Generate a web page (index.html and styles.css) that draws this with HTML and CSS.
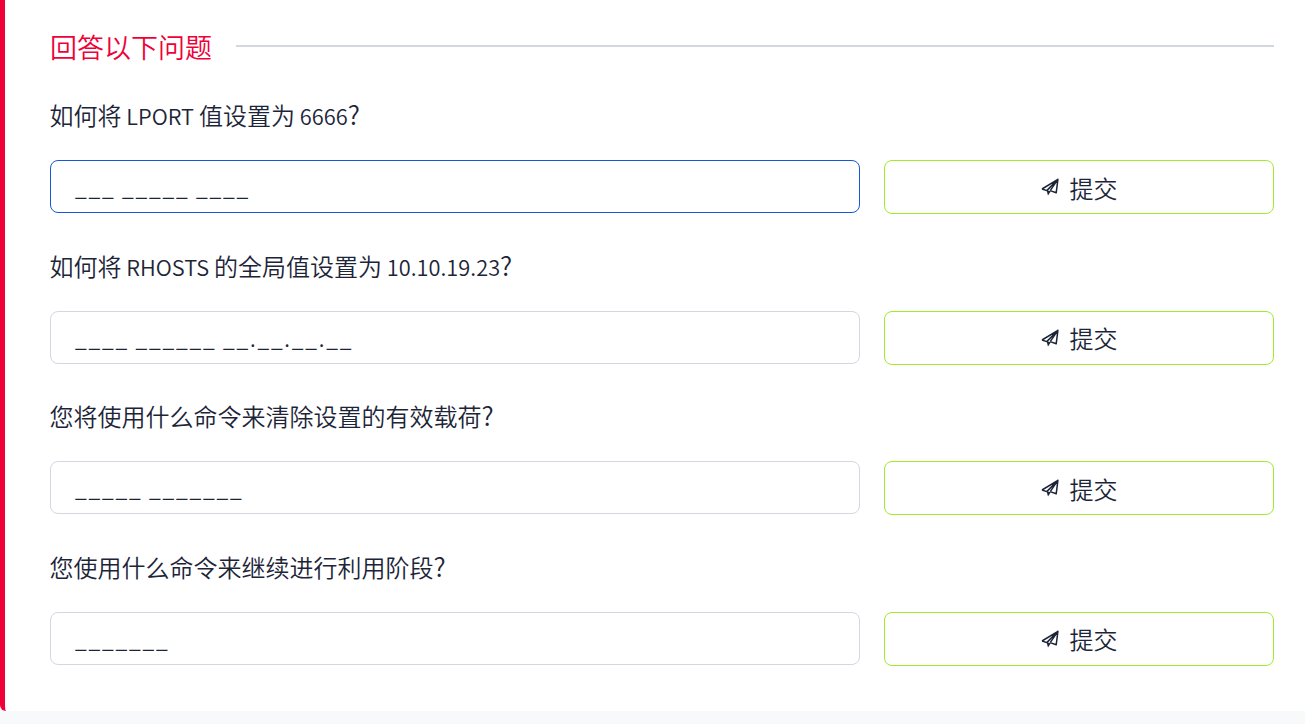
FILE: index.html
```
<!DOCTYPE html>
<html lang="zh-CN">
<head>
<meta charset="utf-8">
<title>回答以下问题</title>
<link rel="stylesheet" href="styles.css">
</head>
<body>
<svg class="sprite" aria-hidden="true">
  <symbol id="plane" viewBox="0 0 18 18">
    <path d="M1 11 16.9 1.3 15.2 14.8 9.2 12.6M1 11 5.8 12.6 16.9 1.3 9.2 12.6" fill="none" stroke="currentColor" stroke-width="1.5" stroke-linejoin="round"/>
    <path d="M5.6 12.3 9.8 13.2 7 17.6Z" fill="currentColor"/>
  </symbol>
</svg>
<main class="card">
  <header class="heading"><h1 class="title">回答以下问题</h1><span class="rule"></span></header>
  <section class="question">
    <p class="label">如何将 <span class="latin">LPORT</span> 值设置为 <span class="latin">6666</span><span class="mark">?</span></p>
    <div class="row"><div class="field active">___ _____ ____</div><button class="submit"><svg class="icon"><use href="#plane"/></svg>提交</button></div>
  </section>
  <section class="question">
    <p class="label">如何将 <span class="latin">RHOSTS</span> 的全局值设置为 <span class="latin">10.10.19.23</span><span class="mark">?</span></p>
    <div class="row"><div class="field">____ ______ __.__.__.__</div><button class="submit"><svg class="icon"><use href="#plane"/></svg>提交</button></div>
  </section>
  <section class="question">
    <p class="label">您将使用什么命令来清除设置的有效载荷<span class="mark">?</span></p>
    <div class="row"><div class="field">_____ _______</div><button class="submit"><svg class="icon"><use href="#plane"/></svg>提交</button></div>
  </section>
  <section class="question">
    <p class="label">您使用什么命令来继续进行利用阶段<span class="mark">?</span></p>
    <div class="row"><div class="field">_______</div><button class="submit"><svg class="icon"><use href="#plane"/></svg>提交</button></div>
  </section>
</main>
</body>
</html>
```
FILE: styles.css
```
* { box-sizing: border-box; }
body {
  margin: 0;
  height: 724px;
  overflow: hidden;
  background: #f8f9fb;
  color: #1c2538;
  font-family: "Noto Sans CJK SC", sans-serif;
  font-weight: 350;
}
.sprite { display: none; }
.card {
  height: 711px;
  padding: 26px 31px 0 45px;
  background: #fff;
  border-left: 5px solid #ef0039;
  border-bottom-left-radius: 6px;
}
.heading { display: flex; align-items: center; gap: 24px; height: 40px; }
.title { margin: 0; padding-top: 2px; font-size: 27px; line-height: 40px; font-weight: 350; color: #ef0039; }
.rule { flex: 1; height: 2px; background: #d3d7df; }
.question { height: 150.5px; padding-top: 31px; }
.label { margin: 0 0 27px; height: 36px; line-height: 36px; font-size: 24px; text-indent: -0.5px; word-spacing: -0.5px; white-space: nowrap; }
.latin { font-size: 21.8px; }
.mark { font-size: 26px; line-height: 1; }
.row { display: grid; grid-template-columns: 810px 390px; gap: 24px; align-items: start; }
.field {
  height: 53px;
  padding: 0 24px;
  border: 1px solid #d3d7df;
  border-radius: 8px;
  font-size: 21px;
  line-height: 52px;
  letter-spacing: 1.8px;
}
.field.active { border-color: #1557d6; }
.submit {
  display: flex;
  align-items: center;
  justify-content: center;
  gap: 11px;
  height: 54px;
  padding: 0;
  border: 1px solid #a3ea2a;
  border-radius: 8px;
  background: #fff;
  color: inherit;
  font: inherit;
  font-size: 24px;
}
.icon { width: 18px; height: 18px; }
```
